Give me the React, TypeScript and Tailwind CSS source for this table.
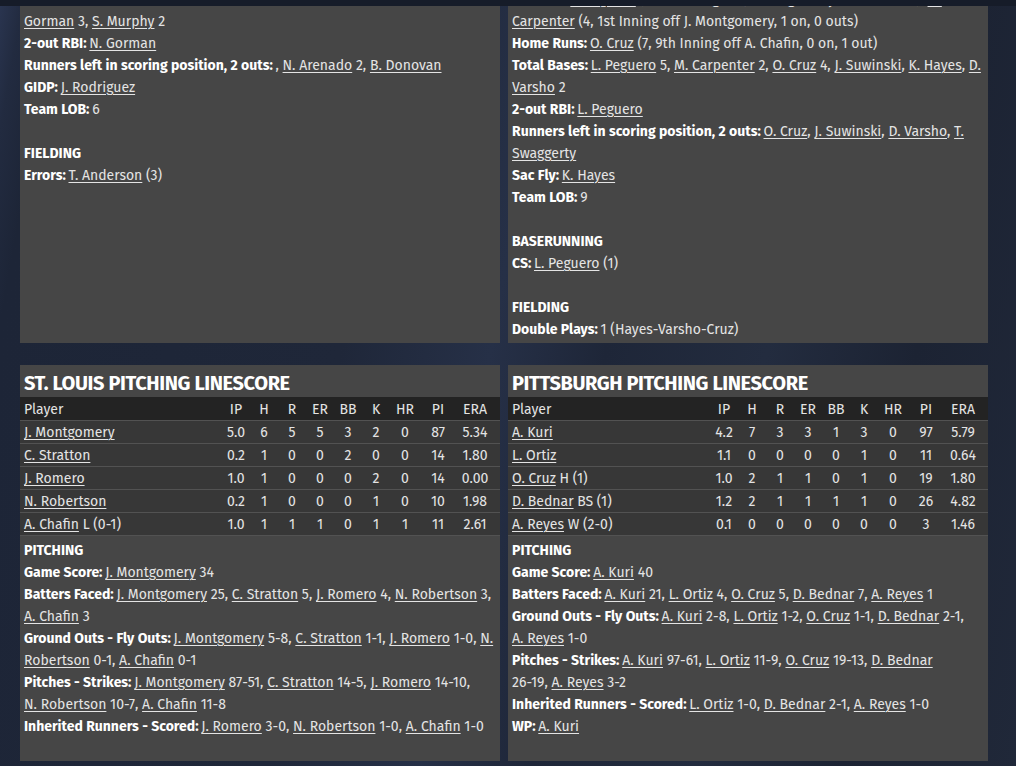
import React from "react";

const L = ({ children }: { children: React.ReactNode }) => (
  <span className="underline decoration-1 underline-offset-2">{children}</span>
);
const B = ({ children }: { children: React.ReactNode }) => (
  <>
    <span className="font-bold text-white">{children}</span>
    <span className="[word-spacing:-1px]"> </span>
  </>
);
const H = ({ children }: { children: React.ReactNode }) => (
  <span className="font-bold text-white">{children}</span>
);
const Line = ({ children }: { children?: React.ReactNode }) => (
  <div className="min-h-[22px]">{children}</div>
);

type Row = { name: string; note?: string; v: string[] };

const stl: Row[] = [
  { name: "J. Montgomery", v: ["5.0", "6", "5", "5", "3", "2", "0", "87", "5.34"] },
  { name: "C. Stratton", v: ["0.2", "1", "0", "0", "2", "0", "0", "14", "1.80"] },
  { name: "J. Romero", v: ["1.0", "1", "0", "0", "0", "2", "0", "14", "0.00"] },
  { name: "N. Robertson", v: ["0.2", "1", "0", "0", "0", "1", "0", "10", "1.98"] },
  { name: "A. Chafin", note: "L (0-1)", v: ["1.0", "1", "1", "1", "0", "1", "1", "11", "2.61"] },
];
const pit: Row[] = [
  { name: "A. Kuri", v: ["4.2", "7", "3", "3", "1", "3", "0", "97", "5.79"] },
  { name: "L. Ortiz", v: ["1.1", "0", "0", "0", "0", "1", "0", "11", "0.64"] },
  { name: "O. Cruz", note: "H (1)", v: ["1.0", "2", "1", "1", "0", "1", "0", "19", "1.80"] },
  { name: "D. Bednar", note: "BS (1)", v: ["1.2", "2", "1", "1", "1", "1", "0", "26", "4.82"] },
  { name: "A. Reyes", note: "W (2-0)", v: ["0.1", "0", "0", "0", "0", "0", "0", "3", "1.46"] },
];
const heads = ["IP", "H", "R", "ER", "BB", "K", "HR", "PI", "ERA"];
const gridCls =
  "grid grid-cols-[1fr_28px_28px_28px_28px_28px_28px_30px_36px_38px] pl-[4px] pr-[6px] items-center";

function Table({ title, rows, children }: { title: string; rows: Row[]; children: React.ReactNode }) {
  return (
    <div className="bg-[#464646] pb-[23px]">
      <div className="h-[32px] px-[4px] pt-[3px] flex items-center text-[20px] tracking-[-0.4px] font-bold text-white leading-none">
        {title}
      </div>
      <div className={`${gridCls} h-[23px] pt-[2px] bg-[#232323]`}>
        <div>Player</div>
        {heads.map((h) => (
          <div key={h} className="text-center">
            {h}
          </div>
        ))}
      </div>
      {rows.map((r) => (
        <div key={r.name} className={`${gridCls} h-[23px] pt-[1px] bg-[#373737] border-t border-[#525252]`}>
          <div className="whitespace-nowrap">
            <L>{r.name}</L>
            {r.note ? ` ${r.note}` : ""}
          </div>
          {r.v.map((x, i) => (
            <div key={i} className="text-center">
              {x}
            </div>
          ))}
        </div>
      ))}
      <div className="border-t border-[#525252] pt-[4px] px-[4px]">{children}</div>
    </div>
  );
}

export default function App() {
  return (
    <div
      className="relative h-[766px] w-[1016px] overflow-hidden text-[14px] leading-[22px] text-[#e4e4e4] bg-[#1e2537] bg-[linear-gradient(100deg,#2a3550_0%,#222b40_2%,#1d2537_5%,#1f2739_35%,#263047_48%,#1e2638_58%,#232c3f_72%,#1c2333_85%,#202839_100%)]"
      style={{ fontFamily: '"Fira Sans", Roboto, "Noto Sans", sans-serif' }}
    >
      <div className="pl-[20px] pr-[28px]">
        <div className="-mt-[11px] grid grid-cols-2 gap-[8px]">
          <div className="bg-[#464646] px-[4px] pb-[2px]">
            <Line>
              <B>Total Bases:</B>W. Contreras 3, P. Goldschmidt 2, N. Arenado 2, B. Donovan 2
            </Line>
            <Line>
              <L>Gorman</L> 3, <L>S. Murphy</L> 2
            </Line>
            <Line>
              <B>2-out RBI:</B>
              <L>N. Gorman</L>
            </Line>
            <Line>
              <H>Runners left in scoring position, 2 outs:</H>
              <span className="[word-spacing:-1px]"> </span>, <L>N. Arenado</L> 2, <L>B. Donovan</L>
            </Line>
            <Line>
              <B>GIDP:</B>
              <L>J. Rodriguez</L>
            </Line>
            <Line>
              <B>Team LOB:</B>6
            </Line>
            <Line />
            <Line>
              <H>FIELDING</H>
            </Line>
            <Line>
              <B>Errors:</B>
              <L>T. Anderson</L> (3)
            </Line>
          </div>
          <div className="bg-[#464646] px-[4px] pb-[2px]">
            <Line>
              <B>Doubles:</B>
              <L>L. Peguero</L> (3, 1st Inning off J. Montgomery, 0 on, 0 outs), <L>M.</L>
            </Line>
            <Line>
              <L>Carpenter</L> (4, 1st Inning off J. Montgomery, 1 on, 0 outs)
            </Line>
            <Line>
              <B>Home Runs:</B>
              <L>O. Cruz</L> (7, 9th Inning off A. Chafin, 0 on, 1 out)
            </Line>
            <Line>
              <B>Total Bases:</B>
              <L>L. Peguero</L> 5, <L>M. Carpenter</L> 2, <L>O. Cruz</L> 4, <L>J. Suwinski</L>, <L>K. Hayes</L>,{" "}
              <L>D.</L>
              <br />
              <L>Varsho</L> 2
            </Line>
            <Line>
              <B>2-out RBI:</B>
              <L>L. Peguero</L>
            </Line>
            <Line>
              <B>Runners left in scoring position, 2 outs:</B>
              <L>O. Cruz</L>, <L>J. Suwinski</L>, <L>D. Varsho</L>, <L>T.</L>
              <br />
              <L>Swaggerty</L>
            </Line>
            <Line>
              <B>Sac Fly:</B>
              <L>K. Hayes</L>
            </Line>
            <Line>
              <B>Team LOB:</B>9
            </Line>
            <Line />
            <Line>
              <H>BASERUNNING</H>
            </Line>
            <Line>
              <B>CS:</B>
              <L>L. Peguero</L> (1)
            </Line>
            <Line />
            <Line>
              <H>FIELDING</H>
            </Line>
            <Line>
              <B>Double Plays:</B>1 (Hayes-Varsho-Cruz)
            </Line>
          </div>
        </div>

        <div className="mt-[22px] grid grid-cols-2 gap-[8px]">
          <Table title="ST. LOUIS PITCHING LINESCORE" rows={stl}>
            <Line>
              <H>PITCHING</H>
            </Line>
            <Line>
              <B>Game Score:</B>
              <L>J. Montgomery</L> 34
            </Line>
            <Line>
              <B>Batters Faced:</B>
              <L>J. Montgomery</L> 25, <L>C. Stratton</L> 5, <L>J. Romero</L> 4, <L>N. Robertson</L> 3,
              <br />
              <L>A. Chafin</L> 3
            </Line>
            <Line>
              <B>Ground Outs - Fly Outs:</B>
              <L>J. Montgomery</L> 5-8, <L>C. Stratton</L> 1-1, <L>J. Romero</L> 1-0, <L>N.</L>
              <br />
              <L>Robertson</L> 0-1, <L>A. Chafin</L> 0-1
            </Line>
            <Line>
              <B>Pitches - Strikes:</B>
              <L>J. Montgomery</L> 87-51, <L>C. Stratton</L> 14-5, <L>J. Romero</L> 14-10,
              <br />
              <L>N. Robertson</L> 10-7, <L>A. Chafin</L> 11-8
            </Line>
            <Line>
              <B>Inherited Runners - Scored:</B>
              <L>J. Romero</L> 3-0, <L>N. Robertson</L> 1-0, <L>A. Chafin</L> 1-0
            </Line>
          </Table>
          <Table title="PITTSBURGH PITCHING LINESCORE" rows={pit}>
            <Line>
              <H>PITCHING</H>
            </Line>
            <Line>
              <B>Game Score:</B>
              <L>A. Kuri</L> 40
            </Line>
            <Line>
              <B>Batters Faced:</B>
              <L>A. Kuri</L> 21, <L>L. Ortiz</L> 4, <L>O. Cruz</L> 5, <L>D. Bednar</L> 7, <L>A. Reyes</L> 1
            </Line>
            <Line>
              <B>Ground Outs - Fly Outs:</B>
              <L>A. Kuri</L> 2-8, <L>L. Ortiz</L> 1-2, <L>O. Cruz</L> 1-1, <L>D. Bednar</L> 2-1,
              <br />
              <L>A. Reyes</L> 1-0
            </Line>
            <Line>
              <B>Pitches - Strikes:</B>
              <L>A. Kuri</L> 97-61, <L>L. Ortiz</L> 11-9, <L>O. Cruz</L> 19-13, <L>D. Bednar</L>
              <br />
              26-19, <L>A. Reyes</L> 3-2
            </Line>
            <Line>
              <B>Inherited Runners - Scored:</B>
              <L>L. Ortiz</L> 1-0, <L>D. Bednar</L> 2-1, <L>A. Reyes</L> 1-0
            </Line>
            <Line>
              <B>WP:</B>
              <L>A. Kuri</L>
            </Line>
          </Table>
        </div>
      </div>
      <div className="absolute left-0 right-0 top-0 h-[6px] bg-[#161c29]" />
    </div>
  );
}
